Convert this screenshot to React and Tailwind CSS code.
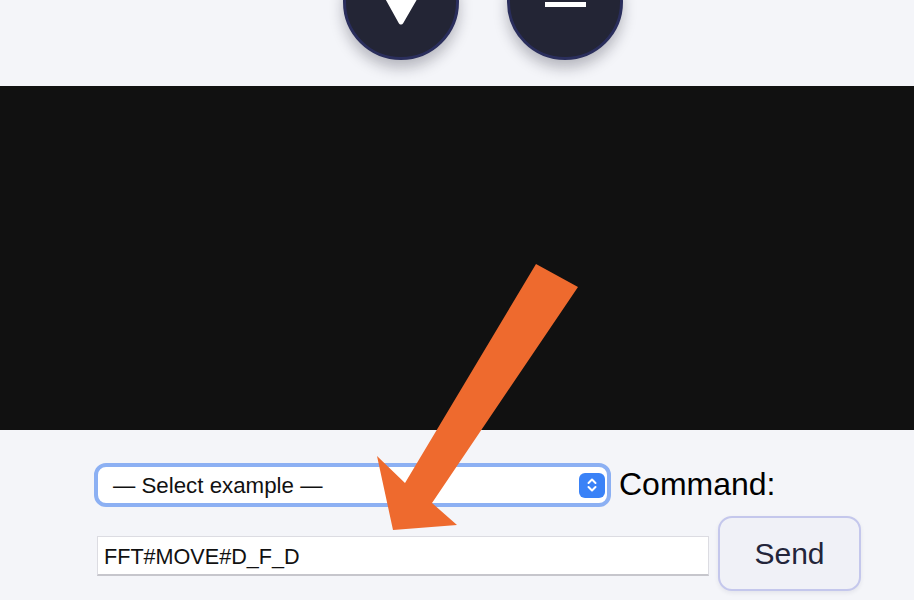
import React from "react";

function RoundButton({ children }) {
  return (
    <div className="w-[116px] h-[116px] rounded-full bg-[#232535] border-[3px] border-[#2a2e5c] shadow-[0_8px_14px_rgba(20,22,40,0.28)] relative overflow-hidden shrink-0">
      {children}
    </div>
  );
}

function Stepper() {
  return (
    <div className="w-[26px] h-[25px] rounded-[6px] bg-[#3a82f7] flex items-center justify-center">
      <svg width="14" height="18" viewBox="0 0 14 18" fill="none">
        <path d="M3.5 7 L7 3.5 L10.5 7" stroke="white" strokeWidth="2" strokeLinecap="round" strokeLinejoin="round" />
        <path d="M3.5 11 L7 14.5 L10.5 11" stroke="white" strokeWidth="2" strokeLinecap="round" strokeLinejoin="round" />
      </svg>
    </div>
  );
}

export default function App() {
  return (
    <div className="relative h-[600px] overflow-hidden bg-[#f4f5f9] font-['Liberation_Sans',Arial,sans-serif]">
      {/* top buttons */}
      <div className="h-[86px] flex items-start">
        <div className="flex gap-[48px] ml-[343px] -mt-[56px]">
          <RoundButton>
            <svg className="absolute left-0 top-0" width="110" height="110" viewBox="0 0 110 110">
              <polygon points="30,30 81,30 55,75" fill="white" stroke="white" strokeWidth="5" strokeLinejoin="round" />
            </svg>
          </RoundButton>
          <RoundButton>
            <svg className="absolute left-0 top-0" width="110" height="110" viewBox="0 0 110 110">
              <rect x="35" y="41" width="41" height="5" fill="white" />
              <rect x="35" y="55" width="41" height="5" fill="white" />
            </svg>
          </RoundButton>
        </div>
      </div>

      {/* video area */}
      <div className="h-[344px] bg-[#111111]" />

      {/* controls */}
      <div className="pl-[94px] pt-[33px]">
        <div className="flex items-center gap-[8px]">
          <div className="w-[517px] h-[44px] rounded-[12px] border-4 border-[#8cb0f3] bg-white flex items-center justify-between pl-[15px] pr-[2px]">
            <span className="text-[22.3px] text-[#111] leading-none mt-[3px]">— Select example —</span>
            <Stepper />
          </div>
          <span className="text-[32px] text-black leading-none -mt-[3px]">Command:</span>
        </div>

        <div className="flex items-start mt-[9px]">
          <div className="ml-[3px] mt-[20px] w-[612px] h-[40px] bg-white border border-[#dcdce2] border-b-2 border-b-[#c6c6cc] flex items-center pl-[6px]">
            <span className="text-[21.6px] text-[#111] leading-none mt-[3px]">FFT#MOVE#D_F_D</span>
          </div>
          <button className="ml-[9px] w-[143px] h-[75px] rounded-[14px] border-2 border-[#c4c7ec] bg-[#f0f1f7] shadow-[0_2px_4px_rgba(40,40,80,0.08)] text-[30px] text-[#23253a] flex items-center justify-center">
            Send
          </button>
        </div>
      </div>

      {/* annotation arrow */}
      <svg className="absolute left-0 top-0 pointer-events-none" width="914" height="600" viewBox="0 0 914 600">
        <polygon
          points="536,264 578,287 432,503 457,525 393,530 377,456 405,483"
          fill="#ee6a2e"
        />
      </svg>
    </div>
  );
}
